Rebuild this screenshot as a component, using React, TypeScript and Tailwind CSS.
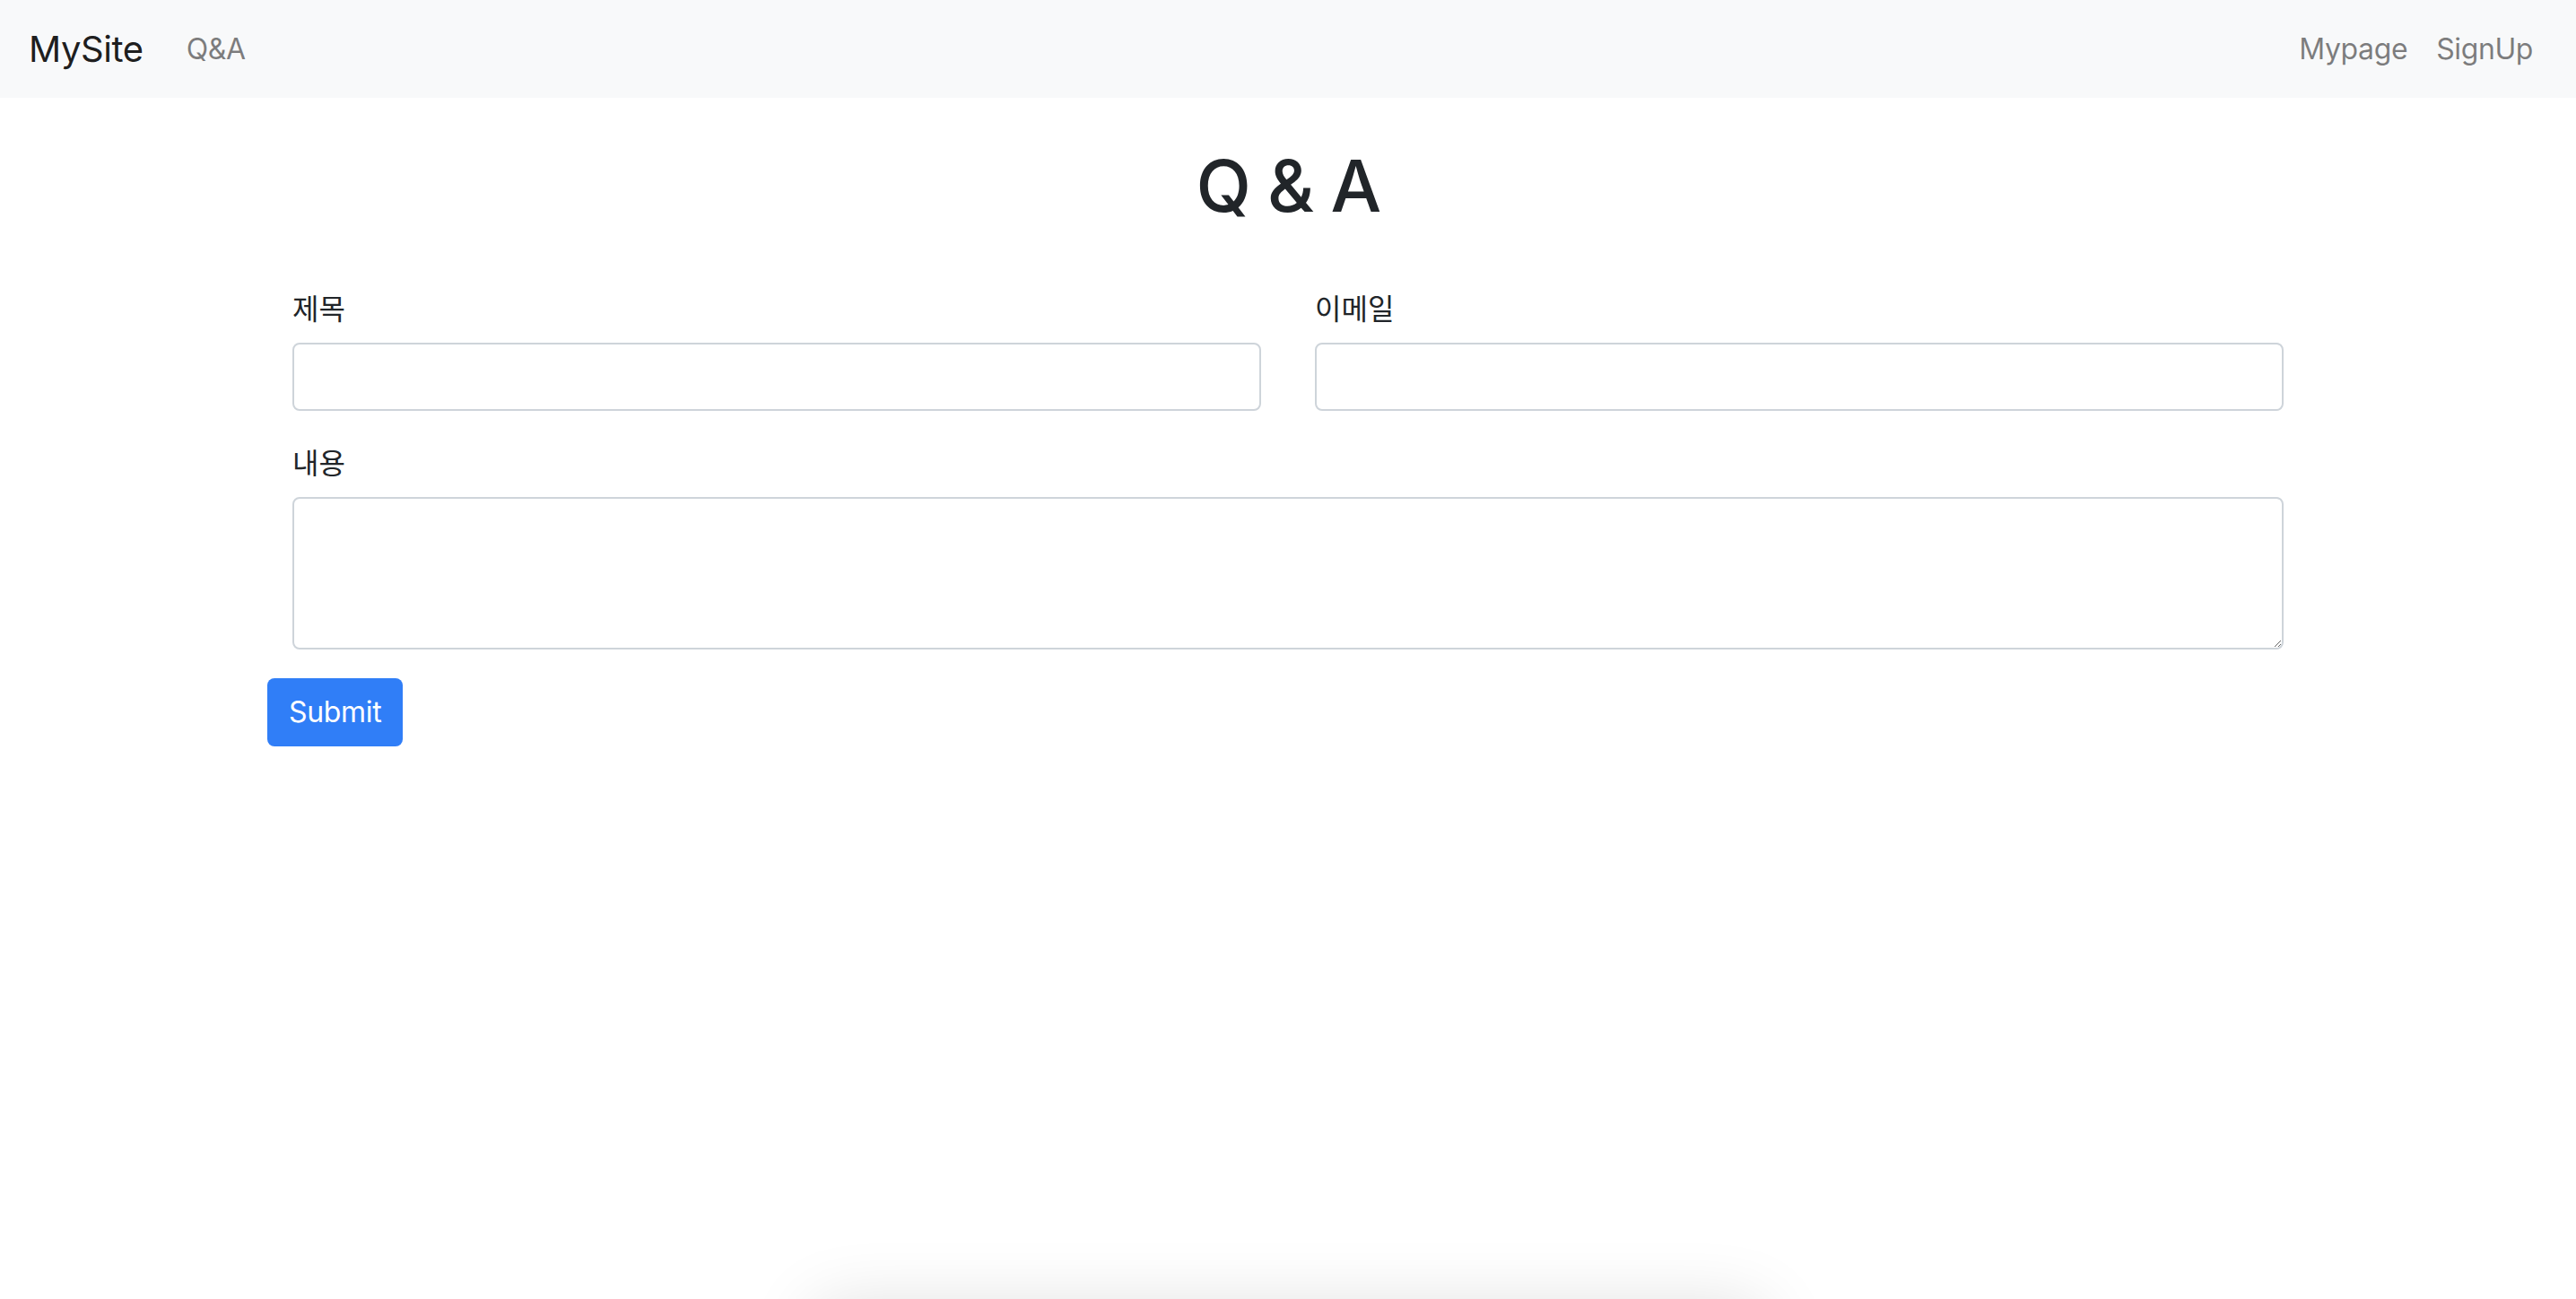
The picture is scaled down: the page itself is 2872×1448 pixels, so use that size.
import React from "react";

export default function App() {
  return (
    <div className="min-h-screen bg-white font-['Inter','Noto_Sans_CJK_KR',sans-serif] text-[#212529]">
      <nav className="flex h-[109px] items-center bg-[#f8f9fa] px-[32px] tracking-[-0.025em]">
        <a className="mr-[32px] text-[40px] leading-[60px] text-black/90">MySite</a>
        <a className="px-[16px] text-[32px] leading-[48px] text-black/50">Q&amp;A</a>
        <div className="ml-auto flex items-center">
          <a className="px-[16px] text-[32px] leading-[48px] text-black/50">Mypage</a>
          <a className="px-[16px] text-[32px] leading-[48px] text-black/50">SignUp</a>
        </div>
      </nav>

      <main className="mx-auto w-[2280px]">
        <h1 className="mt-[50px] text-center text-[80px] font-medium leading-[96px] tracking-[-0.02em] text-[#212529]">
          Q &amp; A
        </h1>
        <form className="mt-[63px]" onSubmit={(e) => e.preventDefault()}>
          <div className="px-[30px]">
            <div className="grid grid-cols-2 gap-x-[60px]">
              <div className="mb-[32px]">
                <label className="mb-[16px] block text-[32px] leading-[48px] font-['Noto_Sans_CJK_KR',sans-serif]">
                  제목
                </label>
                <input
                  type="text"
                  className="block h-[76px] w-full rounded-[8px] border-2 border-[#ced4da] bg-white px-[24px] text-[32px] outline-none"
                />
              </div>
              <div className="mb-[32px]">
                <label className="mb-[16px] block text-[32px] leading-[48px] font-['Noto_Sans_CJK_KR',sans-serif]">
                  이메일
                </label>
                <input
                  type="email"
                  className="block h-[76px] w-full rounded-[8px] border-2 border-[#ced4da] bg-white px-[24px] text-[32px] outline-none"
                />
              </div>
            </div>
            <div className="mb-[32px]">
              <label className="mb-[16px] block text-[32px] leading-[48px] font-['Noto_Sans_CJK_KR',sans-serif]">
                내용
              </label>
              <textarea className="block h-[170px] w-full rounded-[8px] border-2 border-[#ced4da] bg-white px-[24px] py-[12px] text-[32px] outline-none" />
            </div>
          </div>
          <button
            type="submit"
            className="ml-[2px] h-[76px] rounded-[8px] bg-[#307ef7] px-[24px] text-[32px] leading-[48px] tracking-[-0.01em] text-white"
          >
            Submit
          </button>
        </form>
      </main>

      <div className="fixed left-[910px] top-[1458px] h-[120px] w-[1055px] rounded-[8px] bg-white shadow-[0_0_80px_rgba(0,0,0,0.14)]" />
    </div>
  );
}
